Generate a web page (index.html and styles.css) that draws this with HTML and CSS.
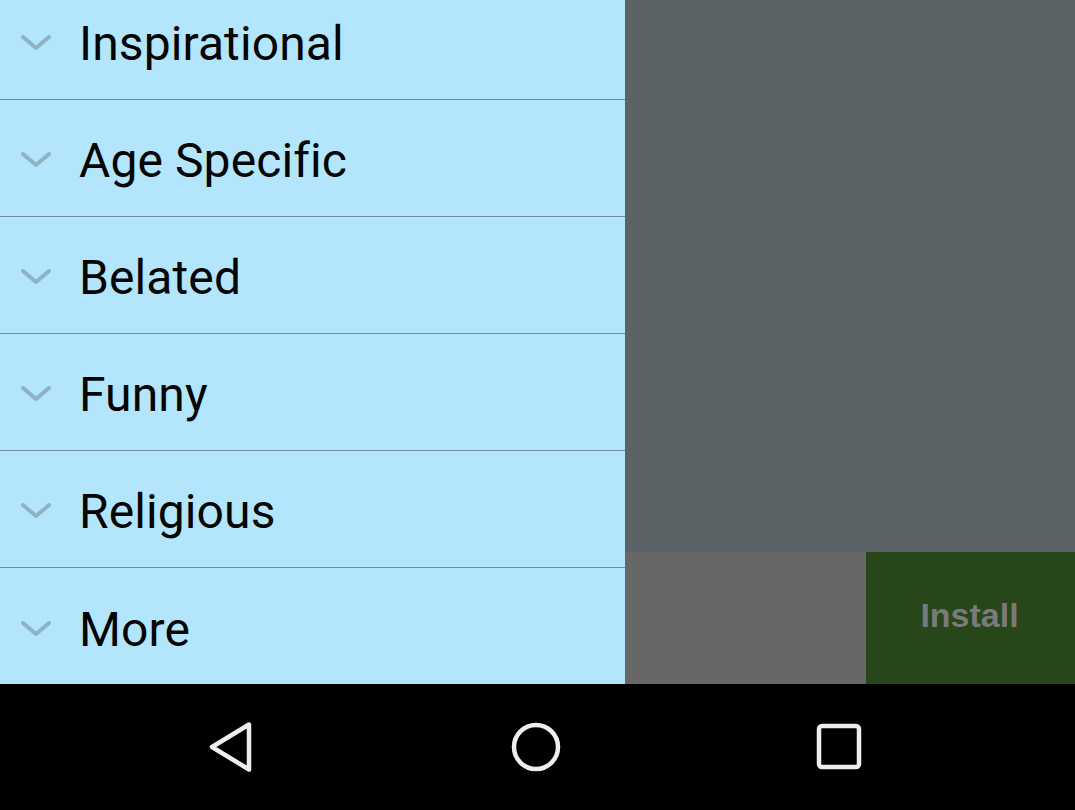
FILE: index.html
```html
<!DOCTYPE html>
<html>
<head>
<meta charset="utf-8">
<link rel="stylesheet" href="styles.css">
</head>
<body>
<div class="screen">
  <div class="main">
    <ul class="drawer">
      <li class="row"><svg class="chev" viewBox="0 0 30 15"><path d="M2 2 L15 13 L28 2"/></svg><span class="label">Inspirational</span></li>
      <li class="row"><svg class="chev" viewBox="0 0 30 15"><path d="M2 2 L15 13 L28 2"/></svg><span class="label">Age Specific</span></li>
      <li class="row"><svg class="chev" viewBox="0 0 30 15"><path d="M2 2 L15 13 L28 2"/></svg><span class="label">Belated</span></li>
      <li class="row"><svg class="chev" viewBox="0 0 30 15"><path d="M2 2 L15 13 L28 2"/></svg><span class="label">Funny</span></li>
      <li class="row"><svg class="chev" viewBox="0 0 30 15"><path d="M2 2 L15 13 L28 2"/></svg><span class="label">Religious</span></li>
      <li class="row"><svg class="chev" viewBox="0 0 30 15"><path d="M2 2 L15 13 L28 2"/></svg><span class="label">More</span></li>
    </ul>
    <div class="side">
      <div class="dim"></div>
      <div class="banner">
        <div class="ad"></div>
        <div class="install">Install</div>
      </div>
    </div>
  </div>
  <nav class="navbar">
    <svg class="nav-icon" viewBox="0 0 50 50"><path d="M41 2.5 L4 25 L41 47.5 Z"/></svg>
    <svg class="nav-icon" viewBox="0 0 50 50"><circle cx="25" cy="25" r="22"/></svg>
    <svg class="nav-icon" viewBox="0 0 50 50"><rect x="5" y="4" width="40" height="41" rx="3"/></svg>
  </nav>
</div>
</body>
</html>
```
FILE: styles.css
```css
* { box-sizing: border-box; }
html, body { margin: 0; padding: 0; }
body { width: 1075px; height: 810px; overflow: hidden; background: #000; }
.screen { display: flex; flex-direction: column; height: 810px; }
.main { display: flex; height: 684px; overflow: hidden; }
.drawer {
  list-style: none; margin: -17px 0 0 0; padding: 0;
  width: 625px; flex: none; background: #b3e5fc;
  display: flex; flex-direction: column;
}
.row {
  height: 117px; flex: none;
  border-bottom: 1px solid #6f8f9e;
  display: flex; align-items: center;
  padding-left: 21px;
  font-family: Roboto, "Noto Sans", sans-serif;
  font-size: 48px; color: #050505;
}
.row:last-child { border-bottom: none; }
.label { margin-top: 5px; letter-spacing: 0.1px; }
.chev {
  width: 30px; height: 15px; margin-right: 28px; margin-top: 3px; flex: none;
  fill: none; stroke: #8fb3c4; stroke-width: 4; stroke-linecap: round; stroke-linejoin: round;
}
.side { flex: 1; display: flex; flex-direction: column; }
.dim { flex: 1; background: #5c6367; }
.banner { height: 132px; display: flex; }
.ad { flex: 1; background: #676767; }
.install {
  width: 209px; background: #27461a; color: #7a7a7a;
  font-family: "Liberation Sans", Arial, sans-serif; font-weight: bold; font-size: 34px;
  display: flex; align-items: center; justify-content: center;
  padding-right: 2px; padding-bottom: 6px;
}
.navbar {
  height: 126px; background: #000;
  display: flex; align-items: center; justify-content: center; gap: 253px;
  padding-right: 4px;
}
.nav-icon {
  width: 50px; height: 50px;
  fill: none; stroke: #eeeeee; stroke-width: 4.5; stroke-linejoin: round;
}
```
